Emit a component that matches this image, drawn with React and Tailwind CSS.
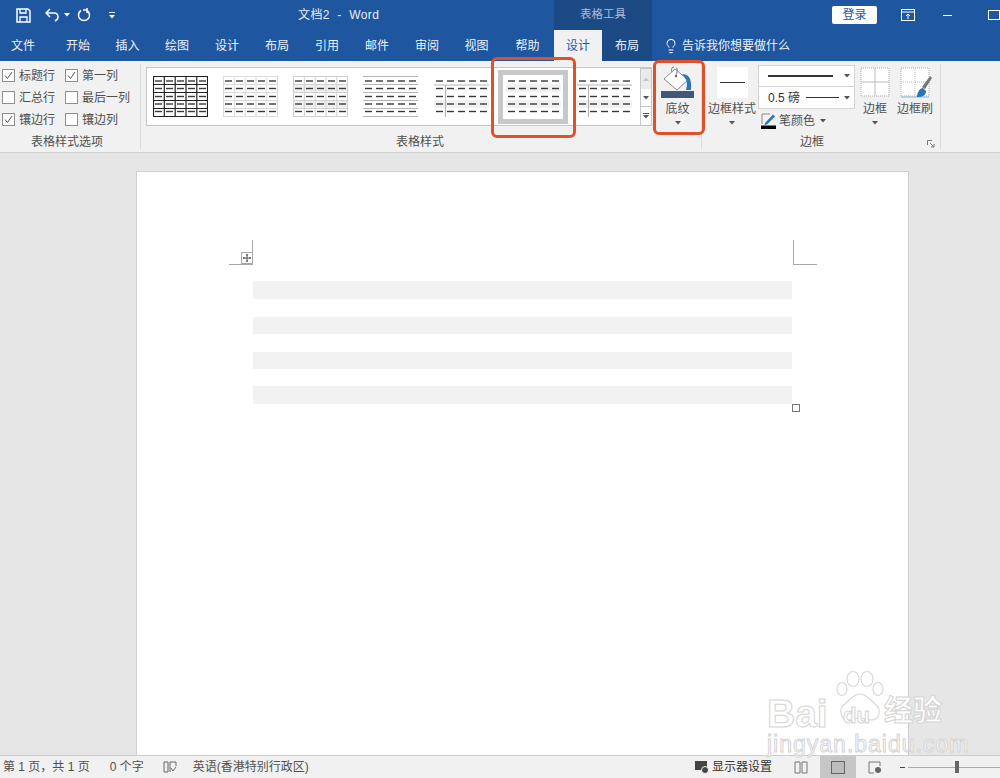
import { Lightbulb } from 'lucide-react'

const TABS = [
  { label: '文件', w: 'w-[46px] mr-[7px]' },
  { label: '开始', w: 'w-[50px]' },
  { label: '插入', w: 'w-[49px]' },
  { label: '绘图', w: 'w-[50px]' },
  { label: '设计', w: 'w-[50px]' },
  { label: '布局', w: 'w-[50px]' },
  { label: '引用', w: 'w-[50px]' },
  { label: '邮件', w: 'w-[50px]' },
  { label: '审阅', w: 'w-[50px]' },
  { label: '视图', w: 'w-[49px]' },
  { label: '帮助', w: 'w-[53px]' },
]

const ROWS = [5, 12.5, 20.5, 28, 35.5]
const COLS = [2, 13, 24, 35, 46]

function Dashes({ x = 0, y = 0, color = '#3a3a3a' }) {
  return ROWS.flatMap((r) =>
    COLS.map((c) => (
      <rect key={`${r}-${c}`} x={c + x} y={r + y - 0.7} width="7" height="1.4" fill={color} />
    ))
  )
}

function Grid({ color, width = 1 }) {
  const ys = [0.5, 8.5, 16.5, 24.5, 32.5, 40.5]
  const xs = [0.5, 11.3, 22.2, 33, 43.8, 54.5]
  return (
    <g stroke={color} strokeWidth={width}>
      {ys.map((y) => <line key={y} x1="0" x2="55" y1={y} y2={y} />)}
      {xs.map((x) => <line key={x} x1={x} x2={x} y1="0" y2="41" />)}
    </g>
  )
}

function Thumb({ variant }) {
  return (
    <svg width="55" height="41" viewBox="0 0 55 41" className="shrink-0">
      {variant === 'dark' && <Grid color="#222" width={1.2} />}
      {variant === 'light' && <Grid color="#dadada" />}
      {variant === 'band' && (
        <>
          <rect y="8" width="55" height="8" fill="#f0f0f0" />
          <rect y="24" width="55" height="8" fill="#f0f0f0" />
          <Grid color="#d0d0d0" />
        </>
      )}
      {variant === 'lines' && (
        <g stroke="#b5b5b5" strokeWidth="1">
          {[0.5, 8.5, 16.5, 24.5, 32.5, 40.5].map((y) => <line key={y} x1="0" x2="55" y1={y} y2={y} />)}
        </g>
      )}
      {variant === 'first' && (
        <>
          <rect y="24" width="55" height="8" fill="#f1f1f1" />
          <line x1="0" x2="55" y1="9" y2="9" stroke="#b5b5b5" strokeWidth="1.2" />
          <line x1="11.5" x2="11.5" y1="9" y2="41" stroke="#b5b5b5" strokeWidth="1.2" />
        </>
      )}
      <Dashes />
    </svg>
  )
}

function SelectedThumb() {
  return (
    <div className="w-[70px] h-[54px] border-[5px] border-[#c8c8c8] bg-white flex items-center justify-center shrink-0">
      <svg width="55" height="41" viewBox="0 0 55 41">
        <rect y="8" width="55" height="8" fill="#f1f1f1" />
        <rect y="24" width="55" height="8" fill="#f1f1f1" />
        <Dashes />
      </svg>
    </div>
  )
}

function Check({ checked, label }) {
  return (
    <div className="flex items-center h-[22px] gap-[4px]">
      <span className="w-[13px] h-[13px] border border-[#8f8f8f] bg-white flex items-center justify-center shrink-0">
        {checked && (
          <svg width="9" height="9" viewBox="0 0 9 9" fill="none">
            <path d="M1 4.5 L3.5 7.5 L8 1" stroke="#555" strokeWidth="1" />
          </svg>
        )}
      </span>
      <span className="text-[12px] text-[#505050] whitespace-nowrap">{label}</span>
    </div>
  )
}

function Caret({ color = '#555' }) {
  return (
    <svg width="6" height="4" viewBox="0 0 6 4" className="shrink-0">
      <path d="M0 0 H6 L3 3.5 Z" fill={color} />
    </svg>
  )
}

function BorderGridIcon() {
  return (
    <svg width="31" height="31" viewBox="0 0 31 31" fill="none">
      <rect x="1" y="1" width="28" height="28" fill="#fff" />
      <rect x="1" y="1" width="28" height="28" stroke="#aaa" strokeDasharray="1 1" />
      <path d="M15 1 V29 M1 15 H29" stroke="#bbb" />
    </svg>
  )
}

function PaintBucket() {
  return (
    <svg width="34" height="33" viewBox="0 0 34 33" fill="none">
      <path d="M13 1 C10 1 10 5 11.5 7" stroke="#777" strokeWidth="1" />
      <path d="M14 3 L27 14 L16 24 L3 13 Z" fill="#fff" stroke="#8a8a8a" strokeWidth="1" />
      <circle cx="15" cy="10" r="1.2" fill="#666" />
      <path d="M15 2 C17 2 16 7 15 10" stroke="#777" strokeWidth="1" />
      <path d="M21 8 C27 8 31 11 30 24 L25 24 C27 17 26 14 21 8 Z" fill="#2e75b6" />
      <rect x="0" y="25" width="33" height="7" fill="#3f5878" />
    </svg>
  )
}

function BorderPainter() {
  return (
    <svg width="33" height="32" viewBox="0 0 33 32" fill="none">
      <rect x="1" y="1" width="28" height="28" fill="#fff" stroke="#aaa" strokeDasharray="1 1" />
      <path d="M15 1 V29 M1 15 H29" stroke="#bbb" strokeDasharray="1 1" />
      <path d="M1 30 H29" stroke="#8bb6dc" />
      <path d="M22 20 L30 9 L32 11 L25 22 Z" fill="#777" />
      <path d="M17 30 C17 25 20 21 23 21 L26 24 C26 28 23 30 17 30 Z" fill="#2e75b6" />
    </svg>
  )
}

function Watermark() {
  return (
    <div className="absolute right-[55px] bottom-[23px] w-[178px] h-[88px] pointer-events-none">
      <svg width="60" height="66" viewBox="0 0 60 60" fill="#fff" stroke="#d8d8d8" strokeWidth="1.2" className="absolute left-[62px] top-0">
        <ellipse cx="13" cy="19" rx="5" ry="6.5" />
        <ellipse cx="24" cy="9" rx="6" ry="7.5" />
        <ellipse cx="38" cy="9" rx="6" ry="7.5" />
        <ellipse cx="49" cy="19" rx="5" ry="6.5" />
        <path d="M31 24 C24 24 21 30 16 34 C9 39 11 50 20 50 C25 50 27 48 31 48 C35 48 37 50 42 50 C51 50 53 39 46 34 C41 30 38 24 31 24 Z" />
      </svg>
      <span className="absolute left-0 top-[27px] text-[39px] leading-[40px] font-bold text-white [-webkit-text-stroke:1px_#d4d4d4] font-['Liberation_Sans',sans-serif]">Bai</span>
      <span className="absolute left-[76px] top-[38px] text-[22px] leading-[22px] font-bold text-white [-webkit-text-stroke:1px_#d4d4d4] font-['Liberation_Sans',sans-serif]">du</span>
      <span className="absolute left-[117px] top-[27px] text-[29px] leading-[34px] font-bold text-white [-webkit-text-stroke:1px_#d4d4d4] whitespace-nowrap">经验</span>
      <span className="absolute left-0 top-[64px] text-[23px] leading-[26px] text-white [-webkit-text-stroke:1px_#d4d4d4] whitespace-nowrap font-['Liberation_Sans',sans-serif] tracking-[1px]">jingyan.baidu.com</span>
    </div>
  )
}

export default function App() {
  return (
    <div className="w-[1000px] h-[778px] overflow-hidden flex flex-col bg-[#e6e6e6] relative font-['Liberation_Sans','Noto_Sans_CJK_SC',sans-serif]">

      {/* title bar */}
      <div className="h-[30px] bg-[#1e56a0] flex items-stretch text-white shrink-0">
        <div className="w-[554px] shrink-0 flex items-center relative">
          <svg width="15" height="15" viewBox="0 0 15 15" fill="none" className="ml-[16px]">
            <path d="M1 1 H12 L14 3 V14 H1 Z" stroke="#fff" strokeWidth="1.5" />
            <path d="M4 1 V5 H10 V1 M4 14 V9 H11 V14" stroke="#fff" strokeWidth="1.3" />
          </svg>
          <svg width="14" height="14" viewBox="0 0 14 14" fill="none" className="ml-[14px]">
            <path d="M5 1 L1 5 L5 9 M1 5 H9 C12 5 13 7 13 9 C13 11 12 12 10 13" stroke="#fff" strokeWidth="1.5" />
          </svg>
          <span className="ml-[5px]"><Caret color="#fff" /></span>
          <svg width="14" height="14" viewBox="0 0 14 14" fill="none" className="ml-[7px]">
            <path d="M4 2.5 A5.5 5.5 0 1 0 10 2.5 M10 0 V5 M10 2 H6" stroke="#fff" strokeWidth="1.5" />
          </svg>
          <svg width="6" height="7" viewBox="0 0 6 7" className="ml-[18px]">
            <path d="M0 0 H6 V1 H0 Z M0 3 H6 L3 6.5 Z" fill="#fff" />
          </svg>
          <span className="ml-[183px] text-[12px] tracking-[0.4px] whitespace-pre text-[#e8eef7]">文档2  -  Word</span>
        </div>
        <div className="w-[98px] shrink-0 bg-[#1c4a85] flex items-center justify-center text-[11.5px] text-[#a9bdd8]">表格工具</div>
        <div className="w-[348px] shrink-0 flex items-center">
          <button className="ml-[180px] w-[45px] h-[18px] shrink-0 bg-white rounded-[2px] text-[#1e56a0] text-[12px] leading-[18px]">登录</button>
          <svg width="14" height="12" viewBox="0 0 14 12" fill="none" className="ml-[24px] shrink-0">
            <rect x="0.5" y="0.5" width="13" height="11" stroke="#fff" />
            <path d="M0 3 H14 M7 10 V5 M5 7 L7 5 L9 7" stroke="#fff" />
          </svg>
          <span className="ml-[28px] w-[9px] h-[1px] bg-white shrink-0" />
          <span className="ml-[36px] w-[12px] h-[10px] border border-white shrink-0" />
        </div>
      </div>

      {/* tabs */}
      <div className="h-[31px] bg-[#1e56a0] flex items-stretch shrink-0 text-[12px] text-[#eef2f8]">
        {TABS.map((t, i) => (
          <div key={i} className={`${t.w} flex items-center justify-center`}>{t.label}</div>
        ))}
        <div className="w-[48px] bg-[#f1f1f1] text-[#1e56a0] flex items-center justify-center">设计</div>
        <div className="w-[50px] bg-[#1c4a85] flex items-center justify-center">布局</div>
        <div className="flex items-center ml-[11px]">
          <Lightbulb size={16} strokeWidth={1.5} color="#fff" />
          <span className="ml-[3px]">告诉我你想要做什么</span>
        </div>
      </div>

      {/* ribbon */}
      <div className="h-[92px] bg-[#f1f1f1] border-b border-[#d0d0d0] flex shrink-0 relative text-[#505050]">

        <div className="w-[141px] border-r border-[#dcdcdc] my-[3px] flex flex-col">
          <div className="flex pl-[2px] pt-[0.5px] gap-[4px] h-[71px] shrink-0">
            <div className="w-[59px] flex flex-col">
              <Check checked label="标题行" />
              <Check label="汇总行" />
              <Check checked label="镶边行" />
            </div>
            <div className="flex flex-col">
              <Check checked label="第一列" />
              <Check label="最后一列" />
              <Check label="镶边列" />
            </div>
          </div>
          <div className="text-[12px] text-center leading-[15px] pr-[6px]">表格样式选项</div>
        </div>

        <div className="w-[561px] border-r border-[#dcdcdc] my-[3px] flex flex-col">
          <div className="pl-[5px] pt-[3px] flex h-[71px] shrink-0">
            <div className="w-[494px] h-[59px] bg-white border border-[#c6c6c6] border-r-0 flex items-center pl-[6px]">
              <Thumb variant="dark" />
              <span className="ml-[15px]"><Thumb variant="light" /></span>
              <span className="ml-[15px]"><Thumb variant="band" /></span>
              <span className="ml-[15px]"><Thumb variant="lines" /></span>
              <span className="ml-[16px]"><Thumb variant="first" /></span>
              <span className="ml-[9px]"><SelectedThumb /></span>
              <span className="ml-[9px]"><Thumb variant="first" /></span>
            </div>
            <div className="w-[12px] h-[59px] border border-[#c6c6c6] bg-white flex flex-col">
              <div className="h-[21px] bg-[#ebebeb] flex items-center justify-center border-b border-[#c6c6c6] rotate-180"><Caret color="#c4c4c4" /></div>
              <div className="h-[18px] flex items-center justify-center border-b border-[#c6c6c6]"><Caret /></div>
              <div className="flex-1 flex flex-col items-center justify-center gap-[1px]">
                <span className="w-[6px] h-[1px] bg-[#555]" />
                <Caret />
              </div>
            </div>
          </div>
          <div className="text-[12px] text-center leading-[15px] pr-[2px]">表格样式</div>
        </div>

        <div className="w-[239px] border-r border-[#dcdcdc] my-[3px] flex flex-col relative">
          <div className="flex h-[71px] shrink-0">
            <div className="w-[52px] ml-[4px] flex flex-col items-center">
              <div className="w-[31px] h-[31px] mt-[3px] bg-white flex items-center justify-center">
                <span className="w-[25px] h-[1px] bg-[#333]" />
              </div>
              <span className="text-[12px] leading-[14px] mt-[4px] whitespace-nowrap">边框样式</span>
              <span className="mt-[5px]"><Caret /></span>
            </div>
            <div className="w-[97px] flex flex-col">
              <div className="h-[22px] mt-[1px] bg-white border border-[#d4d4d4] flex items-center pl-[9px] pr-[4px] justify-between">
                <span className="w-[65px] h-[1.5px] bg-[#333]" />
                <Caret />
              </div>
              <div className="h-[22px] bg-white border border-t-0 border-[#d4d4d4] flex items-center pl-[9px] pr-[4px] justify-between text-[12px] text-[#333]">
                <span className="whitespace-pre">0.5 磅</span>
                <span className="w-[33px] h-[1.5px] bg-[#333]" />
                <Caret />
              </div>
              <div className="flex items-center mt-[1px] h-[22px] pl-[3px] gap-[3px]">
                <svg width="15" height="16" viewBox="0 0 15 16" fill="none" className="shrink-0">
                  <path d="M1 1 H9 M1 1 V11" stroke="#888" />
                  <path d="M4 10 L12 1.5 L14 3.5 L6 11.5 L3.5 12 Z" fill="#2e75b6" />
                  <rect y="12.5" width="15" height="3.5" fill="#000" />
                </svg>
                <span className="text-[12px] whitespace-nowrap">笔颜色</span>
                <span className="ml-[2px]"><Caret /></span>
              </div>
            </div>
            <div className="w-[40px] flex flex-col items-center">
              <div className="mt-[3px]"><BorderGridIcon /></div>
              <span className="text-[12px] leading-[14px] mt-[4px]">边框</span>
              <span className="mt-[5px]"><Caret /></span>
            </div>
            <div className="w-[40px] flex flex-col items-center">
              <div className="mt-[3px] ml-[2px]"><BorderPainter /></div>
              <span className="text-[12px] leading-[14px] mt-[3px] whitespace-nowrap">边框刷</span>
            </div>
          </div>
          <div className="text-[12px] text-center leading-[15px] pr-[18px]">边框</div>
          <svg width="8" height="8" viewBox="0 0 8 8" fill="none" className="absolute right-[5px] bottom-[1px]">
            <path d="M0.5 5 V0.5 H5 M3 3 L7 7 M7 4 V7 H4" stroke="#777" />
          </svg>
        </div>

        {/* orange callouts over the ribbon */}
        <div className="absolute left-[491px] top-[-4px] w-[85px] h-[81px] border-[3px] border-[#e0512b] rounded-[6px]" />
        <div className="absolute left-[653px] top-[-1px] w-[52px] h-[75px] border-[3px] border-[#e0512b] rounded-[6px] flex flex-col items-center pr-[3px]">
          <div className="mt-[3px]"><PaintBucket /></div>
          <span className="text-[12px] leading-[14px] mt-[3px]">底纹</span>
          <span className="mt-[5px]"><Caret /></span>
        </div>
      </div>

      {/* document canvas */}
      <div className="flex-1 min-h-0 pl-[136px] pt-[18px] overflow-hidden relative">
        <div className="w-[773px] h-[600px] bg-white border-t border-x border-[#cfcfcf] relative pt-[109px] pl-[116px] flex flex-col gap-[18px]">
          <span className="absolute left-[92px] top-[92px] w-[24px] h-[1px] bg-[#a8a8a8]" />
          <span className="absolute left-[115px] top-[68px] w-[1px] h-[24px] bg-[#a8a8a8]" />
          <span className="absolute left-[656px] top-[68px] w-[1px] h-[24px] bg-[#a8a8a8]" />
          <span className="absolute left-[656px] top-[92px] w-[24px] h-[1px] bg-[#a8a8a8]" />
          <div className="absolute left-[104px] top-[80px] w-[12px] h-[12px] border border-[#a8a8a8] bg-white flex items-center justify-center">
            <svg width="8" height="8" viewBox="0 0 8 8" fill="none">
              <path d="M4 0 V8 M0 4 H8 M3 1 H5 M3 7 H5 M1 3 V5 M7 3 V5" stroke="#444" strokeWidth="0.9" />
            </svg>
          </div>
          <div className="w-[539px] h-[18px] bg-[#f2f2f2]" />
          <div className="w-[539px] h-[17px] bg-[#f2f2f2]" />
          <div className="w-[539px] h-[17px] bg-[#f2f2f2]" />
          <div className="w-[539px] h-[18px] bg-[#f2f2f2] mt-[-1px]" />
          <span className="absolute left-[655px] top-[232px] w-[8px] h-[8px] border border-[#777] bg-white" />
        </div>
      </div>

      {/* status bar */}
      <div className="h-[23px] bg-[#f1f1f1] border-t border-[#cdcdcd] flex items-center shrink-0 text-[12px] text-[#505050] relative">
        <span className="ml-[3px] whitespace-pre">第 1 页，共 1 页</span>
        <span className="ml-[20px] whitespace-pre">0 个字</span>
        <svg width="14" height="13" viewBox="0 0 14 13" fill="none" className="ml-[19px]">
          <path d="M1 1 H5 V11 H1 Z M7 11 V1 H13 V5 M8 7 L10 10 L13 6" stroke="#666" />
        </svg>
        <span className="ml-[16px] whitespace-nowrap">英语(香港特别行政区)</span>
        <div className="ml-auto w-[305px] h-full flex items-center shrink-0">
          <svg width="14" height="13" viewBox="0 0 14 13">
            <rect y="0" width="12" height="9" fill="#444" />
            <circle cx="10" cy="9" r="3.5" fill="#444" stroke="#f1f1f1" />
          </svg>
          <span className="ml-[3px] w-[60px] whitespace-nowrap text-[#333]">显示器设置</span>
          <svg width="14" height="13" viewBox="0 0 14 13" fill="none" className="ml-[22px]">
            <path d="M1 1 H6 V12 H1 Z M8 1 H13 V12 H8 Z" stroke="#777" />
          </svg>
          <div className="ml-[12px] w-[36px] h-[22px] bg-[#c6c6c6] flex items-center justify-center">
            <span className="w-[14px] h-[13px] border border-[#666] bg-[#bdbdbd]" />
          </div>
          <svg width="14" height="13" viewBox="0 0 14 13" fill="none" className="ml-[12px]">
            <path d="M1 1 H12 V5 M1 1 V12 H6" stroke="#777" />
            <circle cx="10" cy="9" r="3" fill="#666" />
          </svg>
          <span className="ml-[18px] w-[5px] h-[1px] bg-[#444] shrink-0" />
          <div className="ml-[3px] flex-1 h-[1px] bg-[#aaa] relative">
            <span className="absolute left-[47px] top-[-6px] w-[4px] h-[12px] bg-[#666]" />
          </div>
        </div>
      </div>

      <Watermark />
    </div>
  )
}
